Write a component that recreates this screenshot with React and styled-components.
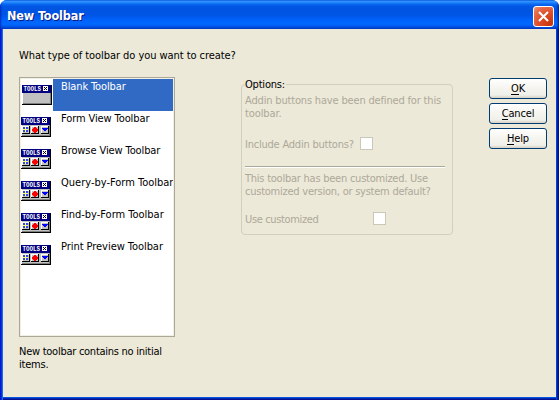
import React from 'react';
import styled, { createGlobalStyle } from 'styled-components';

const GlobalStyle = createGlobalStyle`
  * { box-sizing: border-box; }
  body { margin: 0; background: #fff; overflow: hidden; }
`;

const Window = styled.main`
  width: 559px;
  height: 400px;
  display: flex;
  flex-direction: column;
  overflow: hidden;
  border-radius: 7px 7px 0 0;
  background: linear-gradient(90deg, #0019cf 0 1px, #0831d9 1px 2px, #166aee 2px 3px, #0855dd 3px 556px, #0440dc 556px 557px, #001ea0 557px 558px, #00138c 558px);
  font: 11px/13px "DejaVu Sans Condensed", "DejaVu Sans", sans-serif;
  font-stretch: condensed;
  color: #000;
`;

const TitleBar = styled.header`
  flex: 0 0 29px;
  display: flex;
  align-items: center;
  justify-content: space-between;
  padding: 3px 5px 0 7px;
  background: linear-gradient(180deg, #0058e6 0, #3a93ff 1px, #288eff 2px, #0c6bf2 4px, #0058e6 6px, #0054e0 9px, #0055e5 15px, #0062fb 20px, #0068ff 24px, #005bef 26px, #0043cf 28px, #003dc8 29px);
  box-shadow: inset 2px 0 2px -1px #0029c4, inset -2px 0 2px -1px #00169a;
`;

const Title = styled.h1`
  margin: 0;
  font: bold 12.5px/18px "DejaVu Sans Condensed", "DejaVu Sans", sans-serif;
  font-stretch: condensed;
  letter-spacing: -0.1px;
  color: #fff;
  text-shadow: 1px 1px 0 #0a1883;
`;

const CloseButton = styled.button`
  width: 21px;
  height: 21px;
  padding: 0;
  display: grid;
  place-items: center;
  border: 1px solid #fff;
  border-radius: 3px;
  background: radial-gradient(circle at 85% 90%, #c53710 0, #dc4b25 45%, #e66f4e 80%, #ee9a80 100%);
`;

const Body = styled.div`
  flex: 1;
  display: grid;
  grid-template-columns: 156px 212px 58px;
  column-gap: 66px;
  margin: 0 3px 3px;
  padding: 20px 0 0 16px;
  grid-template-rows: 28px 1fr;
  background: #ece9d8;
  box-shadow: 0 1px 0 #0855dd, 0 2px 0 #0026b5, 0 3px 0 #00138c;
`;

const Text = styled.span`
  display: block;
  white-space: nowrap;
  letter-spacing: ${(p) => p.$track || 0}px;
`;

const Question = styled.div`
  grid-column: 1 / -1;
`;

const List = styled.div`
  width: 156px;
  height: 260px;
  border: 1px solid #aca899;
  box-shadow: inset 0 0 0 1px #f1efe2;
  padding: 1px;
  background: #fff;
  background-clip: padding-box;
`;

const Item = styled.div`
  display: flex;
  height: 32px;
`;

const IconCell = styled.div`
  flex: 0 0 32px;
  padding: ${(p) => (p.$blank ? '6px 0 0 1px' : '6px 0 0 0')};
  svg { display: block; }
`;

const ItemLabel = styled.div`
  flex: 1;
  min-width: 0;
  overflow: hidden;
  padding: 1px 0 0 8px;
  background: ${(p) => (p.$selected ? '#316ac5' : '#fff')};
  color: ${(p) => (p.$selected ? '#fff' : '#000')};
`;

const Note = styled.div`
  margin-top: 8px;
`;

const Options = styled.fieldset`
  width: 212px;
  height: 157px;
  margin: 1px 0 0;
  padding: 3px 0 0 3px;
  border: 1px solid #d0d0bf;
  border-radius: 4px;
  color: #aca899;
  min-width: 0;
`;

const Legend = styled.legend`
  margin-left: 0;
  padding: 0 1px 0 0;
  height: 13px;
  color: #000;
`;

const CheckRow = styled.label`
  display: flex;
  align-items: center;
  height: 13px;
  margin-top: ${(p) => p.$top}px;
`;

const CheckText = styled.span`
  flex: 0 0 ${(p) => p.$width}px;
  padding-top: 1px;
`;

const Check = styled.span`
  width: 13px;
  height: 13px;
  border: 1px solid #cac8bb;
  background: #fff;
`;

const Rule = styled.hr`
  width: 200px;
  height: 2px;
  margin: 16px 0 4px;
  border: 0;
  border-top: 1px solid #aca899;
  background: #fff;
`;

const Buttons = styled.div`
  display: flex;
  flex-direction: column;
  gap: 4px;
  margin: 1px 0 0 -30px;
  width: 58px;
`;

const Button = styled.button`
  height: 21px;
  padding: 0;
  display: flex;
  justify-content: center;
  align-items: center;
  border: 1px solid #003c74;
  border-radius: 3px;
  background: linear-gradient(180deg, #fff 0, #f5f4ef 50%, #f0f0ea 84%, #d6d0c5 100%);
  font: inherit;
  letter-spacing: -0.15px;
  color: #000;
`;

const Key = styled.span`
  display: inline-block;
  height: 13px;
  border-bottom: 1px solid #000;
`;

function ToolbarIcon({ blank }) {
  return (
    <svg width="31" height="20" viewBox="0 0 31 20" shapeRendering="crispEdges">
      <rect width="30" height="20" fill="#000" />
      <rect width="29" height="19" fill="#fff" />
      <rect x="1" y="1" width="28" height="18" fill="#c0c0c0" />
      <rect x="0" y="0" width="29" height="8" fill="#000080" />
      <text x="1.5" y="6.3" textLength="17.5" lengthAdjust="spacingAndGlyphs" fill="#fff" fontFamily="Liberation Mono, monospace" fontWeight="bold" fontSize="7">TOOLS</text>
      <rect x="21" y="1" width="5" height="5" fill="#fff" />
      <path d="M22 2h1v1h1v-1h1v1h-1v1h1v1h-1v-1h-1v1h-1v-1h1v-1h-1z" fill="#000" />
      <path d="M1 18.5h28M28.5 8v11" stroke="#808080" />
      {!blank && (
        <>
          {[1, 10, 20].map((x) => (
            <g key={x}>
              <rect x={x} y="9" width="7" height="7" fill="#c0c0c0" />
              <path d={`M${x} 16.5h7.5v-7.5`} fill="none" stroke="#000" />
              <path d={`M${x} 9.5h7M${x + 0.5} 9v7`} fill="none" stroke="#fff" />
            </g>
          ))}
          <rect x="2" y="10" width="5" height="5" fill="#ffff80" />
          <path d="M2 10h2v2h-2zM5 10h2v2h-2zM2 13h2v2h-2zM5 13h2v2h-2z" fill="#3048e8" />
          <path d="M13 10h2v1h1v1h1v2h-1v1h-1v1h-2v-1h-1v-1h-1v-2h1v-1h1z" fill="#f00" />
          <path d="M21 11h6v1h-1v1h-1v1h-2v-1h-1v-1h-1z" fill="#00f" />
        </>
      )}
    </svg>
  );
}

const items = [
  { label: 'Blank Toolbar', track: -0.12 },
  { label: 'Form View Toolbar', track: -0.1 },
  { label: 'Browse View Toolbar', track: -0.1 },
  { label: 'Query-by-Form Toolbar', track: 0 },
  { label: 'Find-by-Form Toolbar', track: 0 },
  { label: 'Print Preview Toolbar', track: -0.05 },
];

export default function App() {
  return (
    <>
      <GlobalStyle />
      <Window>
        <TitleBar>
          <Title>New Toolbar</Title>
          <CloseButton aria-label="Close">
            <svg width="11" height="11" viewBox="0 0 11 11">
              <path d="M1 1l9 9M10 1l-9 9" stroke="#fff" strokeWidth="2.1" />
            </svg>
          </CloseButton>
        </TitleBar>
        <Body>
          <Question><Text $track={-0.06}>What type of toolbar do you want to create?</Text></Question>
          <div>
            <List>
              {items.map(({ label, track }, i) => (
                <Item key={label}>
                  <IconCell $blank={i === 0}><ToolbarIcon blank={i === 0} /></IconCell>
                  <ItemLabel $selected={i === 0}><Text $track={track}>{label}</Text></ItemLabel>
                </Item>
              ))}
            </List>
            <Note>
              <Text $track={-0.26}>New toolbar contains no initial</Text>
              <Text $track={-0.2}>items.</Text>
            </Note>
          </div>
          <Options>
            <Legend><Text $track={-0.2}>Options:</Text></Legend>
            <Text $track={-0.17}>Addin buttons have been defined for this</Text>
            <Text $track={-0.1}>toolbar.</Text>
            <CheckRow $top={17}>
              <CheckText $width={115}><Text $track={-0.22}>Include Addin buttons?</Text></CheckText>
              <Check />
            </CheckRow>
            <Rule />
            <Text $track={-0.24}>This toolbar has been customized. Use</Text>
            <Text $track={-0.24}>customized version, or system default?</Text>
            <CheckRow $top={14}>
              <CheckText $width={128}><Text $track={-0.35}>Use customized</Text></CheckText>
              <Check />
            </CheckRow>
          </Options>
          <Buttons>
            <Button><Key>O</Key>K</Button>
            <Button><Key>C</Key>ancel</Button>
            <Button><Key>H</Key>elp</Button>
          </Buttons>
        </Body>
      </Window>
    </>
  );
}
